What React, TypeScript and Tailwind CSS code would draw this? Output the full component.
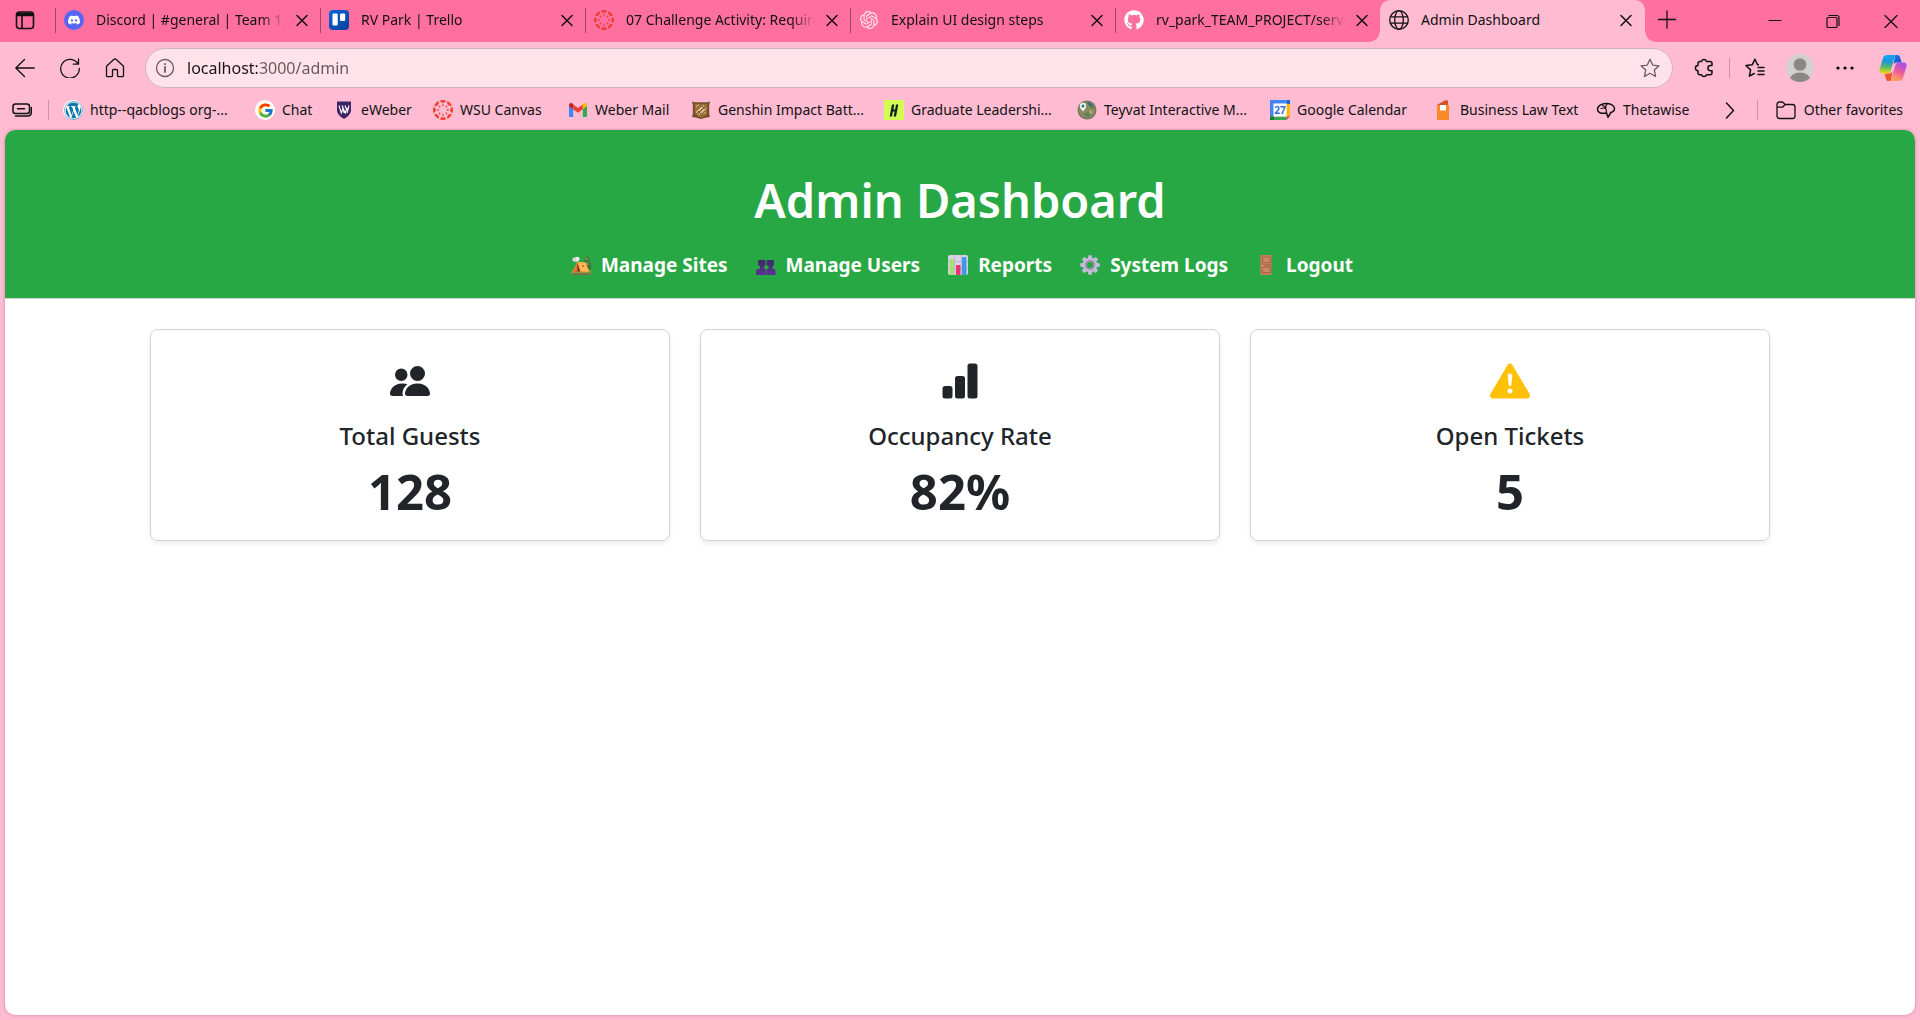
import type { ReactNode } from "react";
import { BsBarChartFill, BsExclamationTriangleFill, BsPeopleFill } from "react-icons/bs";
import { FaGithub, FaWordpress } from "react-icons/fa";
import { FcGoogle } from "react-icons/fc";
import { SiDiscord, SiOpenai } from "react-icons/si";

/* ---------- favicons ---------- */

function DiscordIcon() {
  return (
    <span className="flex size-5 items-center justify-center rounded-full bg-[#5865f2]">
      <SiDiscord className="size-3 text-white" />
    </span>
  );
}

function TrelloIcon() {
  return (
    <svg viewBox="0 0 20 20" className="size-5">
      <defs>
        <linearGradient id="trello" x1="0" y1="0" x2="1" y2="1">
          <stop offset="0" stopColor="#0b66dd" />
          <stop offset="1" stopColor="#083f96" />
        </linearGradient>
      </defs>
      <rect width="20" height="20" rx="4" fill="url(#trello)" />
      <rect x="3.5" y="3.5" width="5.2" height="12" rx="1.2" fill="#fff" />
      <rect x="11" y="3.5" width="5.2" height="7.5" rx="1.2" fill="#fff" />
    </svg>
  );
}

const EIGHTHS = [0, 45, 90, 135, 180, 225, 270, 315];

function CanvasIcon() {
  return (
    <svg viewBox="-10 -10 20 20" className="size-5" fill="#ef4130">
      {EIGHTHS.map((angle) => (
        <g key={angle} transform={`rotate(${angle})`}>
          <path d="M-3.1 -9.5 A10 10 0 0 1 3.1 -9.5 A3.2 3.2 0 0 1 -3.1 -9.5Z" />
          <circle cy="-4.9" r="0.9" />
        </g>
      ))}
    </svg>
  );
}

function WordPressIcon() {
  return (
    <span className="flex size-5 items-center justify-center rounded-full bg-white">
      <FaWordpress className="size-[19px] text-[#1177a8]" />
    </span>
  );
}

function GoogleIcon() {
  return (
    <span className="flex size-5 items-center justify-center rounded-full bg-white">
      <FcGoogle className="size-[17px]" />
    </span>
  );
}

function WeberIcon() {
  return (
    <svg viewBox="0 0 20 20" className="size-5">
      <path d="M3 1.5h14v8.5c0 4-3.2 6.6-7 9-3.8-2.4-7-5-7-9z" fill="#3e2266" />
      <path d="M5 5.500l2.300 7.500 1.700-5 1 5M8 5.500l3.200 7.500 2-5M11 5.500l1.700 4.500M15 5.500l-2 7.500" stroke="#fff" strokeWidth="1.100" fill="none" />
    </svg>
  );
}

function GmailIcon() {
  return (
    <svg viewBox="0 0 20 20" className="size-5">
      <path d="M1 5.5l4.2 3.2V17H2.3C1.6 17 1 16.4 1 15.700z" fill="#4285f4" />
      <path d="M19 5.500l-4.200 3.200V17h2.900c.7 0 1.300-.6 1.300-1.300z" fill="#34a853" />
      <path d="M14.800 4.400v4.800L19 6.100V4.900c0-1.700-1.900-2.600-3.200-1.600z" fill="#fbbc04" />
      <path d="M5.200 9.200V4.400L10 8l4.800-3.600v4.800L10 12.800z" fill="#ea4335" />
      <path d="M1 4.900v1.200l4.200 3.100V4.400l-1-1.100C2.900 2.300 1 3.200 1 4.900z" fill="#c5221f" />
    </svg>
  );
}

function GenshinIcon() {
  return (
    <svg viewBox="0 0 20 20" className="size-5">
      <path d="M1 1.500l3 .7h12l3-.7-.8 3.500v9l.8 3-4.500.8L10 19l-4.500-1.200L1 17l.8-3V5z" fill="#76502a" />
      <path d="M3.800 4h12.400v9L14 16l-4 1.500L6 16l-2.200-3z" fill="#9a6d38" />
      <path d="M5.500 12.500L13 5.500M8 14.500l7-6.500" stroke="#f3dfb4" strokeWidth="1.300" />
      <path d="M5 7l3-2.500M12.500 14l2.500-2" stroke="#e0bd80" strokeWidth="1" />
      <path d="M7 11l3 3M11 6l3.500 3" stroke="#5b3a1b" strokeWidth="1" />
    </svg>
  );
}

function HandshakeIcon() {
  return (
    <svg viewBox="0 0 20 20" className="size-5">
      <rect width="20" height="20" fill="#d3fb52" />
      <path d="M8 4.500h2.300l-.9 5h1.700l.9-5h2.300L12 16.500H9.700l.9-5H8.900l-.9 5H5.700z" fill="#06201c" />
    </svg>
  );
}

function TeyvatIcon() {
  return (
    <svg viewBox="0 0 20 20" className="size-5">
      <circle cx="10" cy="10" r="9.500" fill="#77745a" />
      <circle cx="10" cy="10" r="8.300" fill="#8a8a5c" />
      <path d="M11 3l4 2 2.500 4-3.500-1-3-3zM6 14l5-2 4 3-4 2.500z" fill="#5f7f5a" />
      <path d="M12 9l4 3-3 3z" fill="#b3a877" />
      <path d="M10.500 2.500l5 3.500" stroke="#2a6f7c" strokeWidth="1.600" />
      <path d="M6 11.500C3.500 8.500 2.800 7.500 2.800 6A3.200 3.200 0 0 1 9.200 6C9.200 7.500 8.500 8.500 6 11.500z" fill="#eef6f4" />
      <circle cx="6" cy="6" r="1.500" fill="#1e7b86" />
    </svg>
  );
}

function CalendarIcon() {
  return (
    <svg viewBox="0 0 20 20" className="size-5">
      <path d="M0 0h16.500v4H4v12.500H0z" fill="#4285f4" />
      <path d="M16.500 0H20v4h-3.500z" fill="#1967d2" />
      <path d="M16.500 4H20v12.500h-3.500z" fill="#fbbc04" />
      <path d="M0 16.500h16.500V20H0z" fill="#34a853" />
      <path d="M0 16.500h4V20H0z" fill="#188038" />
      <path d="M16.500 16.500H20L16.500 20z" fill="#ea4335" />
      <rect x="3.500" y="3.500" width="13" height="13" fill="#fff" />
      <text x="10" y="13.700" textAnchor="middle" fontSize="10" fontWeight="700" fill="#2f6fe0" fontFamily="Noto Sans, sans-serif">
        27
      </text>
    </svg>
  );
}

function LawBookIcon() {
  return (
    <svg viewBox="0 0 20 20" className="size-5">
      <path d="M4 5l8-4.500h3V5h1v15H4z" fill="#f68b28" />
      <path d="M4 5l8-4.500h3V5z" fill="#d4502a" />
      <path d="M7 5h6v5.500H7z" fill="#fff" />
    </svg>
  );
}

function ThetawiseIcon() {
  return (
    <svg viewBox="0 0 20 20" className="size-5" fill="none" stroke="#111" strokeWidth="1.500" strokeLinejoin="round" strokeLinecap="round">
      <path d="M1.500 9.500C1.500 6 5.500 3.500 10 3.500s8.500 2 8.500 5c0 2.200-1.600 3.500-3.700 4L12 17.300 10.500 13C5 14 1.500 12.500 1.500 9.500z" />
      <path d="M6.500 5.500c3 1 4 4 4 7.500M5 8.500c2-.8 4-.5 5 1M10 7.500C9.500 6.200 10 5 11 4.500" strokeWidth="1.200" />
    </svg>
  );
}

/* ---------- browser glyphs ---------- */

function Glyph({ children, className = "size-5", width = 1.3 }: { children: ReactNode; className?: string; width?: number }) {
  return (
    <svg viewBox="0 0 20 20" className={className} fill="none" stroke="currentColor" strokeWidth={width} strokeLinecap="round" strokeLinejoin="round">
      {children}
    </svg>
  );
}

function GlobeIcon() {
  return (
    <Glyph>
      <circle cx="10" cy="10" r="9.300" />
      <ellipse cx="10" cy="10" rx="4.300" ry="9.300" />
      <path d="M1.500 6.800h17M1.500 13.200h17" />
    </Glyph>
  );
}

function CloseIcon() {
  return (
    <Glyph width={1.5}>
      <path d="M5 5.500l10 10M15 5.500l-10 10" />
    </Glyph>
  );
}

function CopilotIcon() {
  return (
    <svg viewBox="0 0 28 28" className="size-7">
      <defs>
        <linearGradient id="cpLeft" x1="0.300" y1="0" x2="0.200" y2="1">
          <stop offset="0" stopColor="#12a5f5" />
          <stop offset="0.350" stopColor="#1e96d8" />
          <stop offset="0.650" stopColor="#5fbb62" />
          <stop offset="1" stopColor="#f8dc10" />
        </linearGradient>
        <linearGradient id="cpRight" x1="0.800" y1="0" x2="0.400" y2="1">
          <stop offset="0" stopColor="#9a4ff5" />
          <stop offset="0.500" stopColor="#ee5b9a" />
          <stop offset="1" stopColor="#fda45a" />
        </linearGradient>
        <linearGradient id="cpTop" x1="0" y1="0" x2="1" y2="1">
          <stop offset="0" stopColor="#1b7fe8" />
          <stop offset="1" stopColor="#1646c8" />
        </linearGradient>
      </defs>
      <path d="M16 1h2.500c1.300 0 2 .8 2.500 2.300L22.500 8.500H18c-2 0-3 1-3.500 2.500z" fill="url(#cpTop)" />
      <path d="M12 27H9.500c-1.300 0-2-.8-2.500-2.300L5.500 19.500H10c2 0 3-1 3.500-2.500z" fill="#f0542d" />
      <path d="M8.500 1H18c-1.500 0-2.200 1-2.700 2.700L12 16c-.7 2.500-2 3.500-4 3.500H3.500C.8 19.500 0 17.500.6 15.300L4 4c.6-2 2-3 4.500-3z" fill="url(#cpLeft)" />
      <path d="M19.500 27H10c1.500 0 2.200-1 2.700-2.700L16 12c.7-2.500 2-3.500 4-3.500h4.500c2.700 0 3.500 2 2.900 4.200L24 24c-.6 2-2 3-4.500 3z" fill="url(#cpRight)" />
    </svg>
  );
}

/* ---------- navigation pictograms ---------- */

function CampIcon() {
  return (
    <svg viewBox="0 0 20 20" className="size-5">
      <ellipse cx="5" cy="4.500" rx="3.600" ry="2.300" fill="#d9d5e2" />
      <circle cx="6.500" cy="3.500" r="1.800" fill="#f3f1f8" />
      <path d="M16 0l3 5h-1l2 4v6h-7V8l-1-1 2-2z" fill="#45743a" />
      <path d="M15.500 1.500l2 3.500h-3zM16 6l2.500 4h-4z" fill="#7a9a58" />
      <path d="M0 16c3-2.500 16-3 20-1v4c0 .6-.4 1-1 1H1c-.6 0-1-.4-1-1z" fill="#8a9a42" />
      <path d="M1 18.300h18V20H1z" fill="#85684a" />
      <path d="M6 7L14.500 7.500 18 16.500H2z" fill="#fba13a" />
      <path d="M6.500 7L14.500 7.500l3.500 9h-7z" fill="#ffb950" />
      <path d="M6.500 7.500l2.500 9H3.500z" fill="#5a2f2a" />
      <path d="M6.500 7.500L6.500 16.500H2z" fill="#f3702f" />
      <path d="M11 10h2v2h-2z" fill="#f26a3a" />
    </svg>
  );
}

function UsersIcon() {
  return (
    <svg viewBox="0 0 20 20" className="size-5">
      <defs>
        <linearGradient id="bust" x1="0" y1="0" x2="0" y2="1">
          <stop offset="0" stopColor="#3d2a63" />
          <stop offset="1" stopColor="#593396" />
        </linearGradient>
      </defs>
      <path d="M3 5h5.500l1 1v4l-1.500 1.500v2l2 1V20H0v-3.500C0 14.500 1.500 14 4 13.500v-2L2 10V6z" fill="url(#bust)" />
      <path d="M11.500 5H17l1 1v4l-1.500 1.500v2c2.500.5 3 1 3 3V20H10.500v-5.500l2-1v-2L10.500 10V6z" fill="url(#bust)" />
    </svg>
  );
}

function ReportsIcon() {
  return (
    <svg viewBox="0 0 20 20" className="size-5">
      <rect width="20" height="20" rx="2" fill="#dcd3e6" />
      <path d="M0 6.500h20M0 13h20M6.700 0v20M13.300 0v20" stroke="#b8acc8" strokeWidth="0.800" />
      <rect x="1.500" y="4" width="4.500" height="16" rx="1" fill="#a5e072" />
      <rect x="8" y="10" width="4.500" height="10" rx="1" fill="#e8356f" />
      <rect x="14" y="2" width="4.500" height="18" rx="1" fill="#3c9be8" />
    </svg>
  );
}

function GearIcon() {
  return (
    <svg viewBox="-10 -10 20 20" className="size-5">
      {EIGHTHS.map((angle) => (
        <rect key={angle} x="-2" y="-9.800" width="4" height="5" rx="1.300" fill="#c6b8da" transform={`rotate(${angle})`} />
      ))}
      <circle r="5.300" fill="none" stroke="#c9bddb" strokeWidth="4" />
      <circle r="4.200" fill="none" stroke="#958aa6" strokeWidth="1.600" />
    </svg>
  );
}

function DoorIcon() {
  return (
    <svg viewBox="0 0 20 20" className="size-5">
      <rect x="4.500" width="11" height="20" fill="#c97a58" />
      <path d="M6.500 2h7.500v5.500H6.500zM6.500 12h7.500v5.500H6.500z" fill="#cf8761" stroke="#9f5e3f" strokeWidth="0.800" />
      <path d="M5.500 9.800h9" stroke="#9f5e3f" strokeWidth="0.800" />
      <circle cx="6.500" cy="10.500" r="0.800" fill="#f5c46a" />
    </svg>
  );
}

/* ---------- data ---------- */

const TABS = [
  { title: "Discord | #general | Team 1_C", icon: <DiscordIcon /> },
  { title: "RV Park | Trello", icon: <TrelloIcon /> },
  { title: "07 Challenge Activity: Requirements", icon: <CanvasIcon /> },
  { title: "Explain UI design steps", icon: <SiOpenai className="size-[18px] text-[#ffe3ec]" /> },
  { title: "rv_park_TEAM_PROJECT/server", icon: <FaGithub className="size-5 text-white" /> },
];

const FAVORITES = [
  { label: "http--qacblogs org-...", width: "w-48", icon: <WordPressIcon /> },
  { label: "Chat", width: "w-[79px]", icon: <GoogleIcon /> },
  { label: "eWeber", width: "w-[99px]", icon: <WeberIcon /> },
  { label: "WSU Canvas", width: "w-[135px]", icon: <CanvasIcon /> },
  { label: "Weber Mail", width: "w-[123px]", icon: <GmailIcon /> },
  { label: "Genshin Impact Batt...", width: "w-[193px]", icon: <GenshinIcon /> },
  { label: "Graduate Leadershi...", width: "w-[193px]", icon: <HandshakeIcon /> },
  { label: "Teyvat Interactive M...", width: "w-[193px]", icon: <TeyvatIcon /> },
  { label: "Google Calendar", width: "w-[163px]", icon: <CalendarIcon /> },
  { label: "Business Law Text", width: "w-[163px]", icon: <LawBookIcon /> },
  { label: "Thetawise", width: "w-[110px]", icon: <ThetawiseIcon /> },
];

const NAV = [
  { label: "Manage Sites", icon: <CampIcon /> },
  { label: "Manage Users", icon: <UsersIcon /> },
  { label: "Reports", icon: <ReportsIcon /> },
  { label: "System Logs", icon: <GearIcon /> },
  { label: "Logout", icon: <DoorIcon /> },
];

const STATS = [
  { label: "Total Guests", value: "128", icon: <BsPeopleFill className="size-10" /> },
  { label: "Occupancy Rate", value: "82%", icon: <BsBarChartFill className="size-10" /> },
  { label: "Open Tickets", value: "5", icon: <BsExclamationTriangleFill className="size-10 text-[#ffc107]" /> },
];

/* ---------- browser chrome ---------- */

function TabStrip() {
  return (
    <div className="flex h-[42px] bg-[#ff6f9f]">
      <button aria-label="Tab actions" className="flex w-[55px] shrink-0 items-center justify-center pr-1.5 pb-0.5">
        <Glyph width={1.6}>
          <rect x="1.500" y="2" width="17" height="16.500" rx="3" />
          <path d="M2 4.500h16M7 6v12" />
          <path d="M2.500 3.500h15v2h-15z" fill="currentColor" />
        </Glyph>
      </button>
      {TABS.map((tab) => (
        <div key={tab.title} className="flex w-[265px] min-w-0 items-center pr-2 pb-0.5">
          <span className="h-[25px] w-px shrink-0 bg-[#a34264]" />
          <span className="ml-2 flex w-5 shrink-0 justify-center">{tab.icon}</span>
          <button className="ml-3 min-w-0 flex-1 overflow-hidden text-left whitespace-nowrap [mask-image:linear-gradient(to_right,black_calc(100%-24px),transparent)]">
            {tab.title}
          </button>
          <button aria-label={`Close ${tab.title}`} className="ml-[7px] shrink-0">
            <CloseIcon />
          </button>
        </div>
      ))}
      <div className="relative flex w-[265px] min-w-0 items-center rounded-t-[10px] bg-[#ffbbd1] pr-[9px] pb-0.5 pl-[9px]">
        <span className="absolute bottom-0 -left-2.5 size-2.5 bg-[radial-gradient(circle_at_top_left,transparent_9px,#ffbbd1_10px)]" />
        <span className="absolute -right-2.5 bottom-0 size-2.5 bg-[radial-gradient(circle_at_top_right,transparent_9px,#ffbbd1_10px)]" />
        <GlobeIcon />
        <button className="ml-3 min-w-0 flex-1 overflow-hidden text-left whitespace-nowrap">Admin Dashboard</button>
        <button aria-label="Close Admin Dashboard" className="ml-[7px] shrink-0">
          <CloseIcon />
        </button>
      </div>
      <button aria-label="New tab" className="ml-3 shrink-0 pb-0.5">
        <Glyph width={1.3}>
          <path d="M10 1v17M1.500 9.500h17" />
        </Glyph>
      </button>
      <div className="ml-auto flex shrink-0">
        <button aria-label="Minimize" className="flex w-[58px] items-center justify-center">
          <Glyph width={1.2}>
            <path d="M4 9.500h12" />
          </Glyph>
        </button>
        <button aria-label="Restore" className="flex w-[58px] items-center justify-center">
          <Glyph width={1.2}>
            <rect x="4" y="6.500" width="10" height="10" rx="1" />
            <path d="M6 4.500h8c1.300 0 2 .7 2 2v8" />
          </Glyph>
        </button>
        <button aria-label="Close window" className="flex w-[58px] items-center justify-center">
          <Glyph width={1.2}>
            <path d="M4 4.500l12 12M16 4.500L4 16.500" />
          </Glyph>
        </button>
      </div>
    </div>
  );
}

function Toolbar() {
  return (
    <div className="flex items-center pt-1.5 pr-[13px] pb-0.5 pl-[15px]">
      <div className="flex shrink-0 gap-[25px]">
        <button aria-label="Back">
          <Glyph>
            <path d="M19.300 10H.8M9.500 1.500L.8 10l8.700 8.500" />
          </Glyph>
        </button>
        <button aria-label="Refresh">
          <Glyph>
            <path d="M18.500 1v5.200h-5.200M18 6A9.300 9.300 0 1 0 19.300 10.500" />
          </Glyph>
        </button>
        <button aria-label="Home">
          <Glyph>
            <path d="M1.500 8.200L8.700 1.600c.8-.7 1.800-.7 2.600 0l7.200 6.600v9.300c0 .7-.5 1.200-1.200 1.200h-3.600c-.7 0-1.200-.5-1.200-1.200V12.500c0-.6-.4-1-1-1H8.500c-.6 0-1 .4-1 1v5c0 .7-.5 1.200-1.200 1.200H2.700c-.7 0-1.200-.5-1.200-1.200z" />
          </Glyph>
        </button>
      </div>
      <label className="ml-5 flex h-10 min-w-0 flex-1 items-center rounded-full border border-[#d3b3c0] bg-[#ffe2ea] pr-3 pl-[9px]">
        <Glyph className="size-5 shrink-0 text-[#6b5b62]">
          <circle cx="10" cy="10" r="8.500" />
          <path d="M10 9v5M10 6v.2" strokeWidth="1.800" />
        </Glyph>
        <input
          aria-label="Address"
          defaultValue="localhost:3000/admin"
          className="ml-3 min-w-0 flex-1 bg-[linear-gradient(to_right,#1b1418_70px,#65575d_70px)] bg-clip-text text-base text-transparent caret-black outline-none"
        />
        <button aria-label="Add to favorites" className="text-[#6b5b62]">
          <Glyph>
            <path d="M10 1.200l2.700 5.900 6.300.7-4.700 4.300 1.300 6.400L10 15.300l-5.600 3.200 1.300-6.400L1 7.800l6.300-.7z" />
          </Glyph>
        </button>
      </label>
      <div className="ml-[21px] flex shrink-0 items-center">
        <button aria-label="Extensions">
          <Glyph width={1.5}>
            <path d="M6 3.500h1.500a2.600 2.600 0 0 1 5 0H16c1.200 0 2 .8 2 2v2h-1.500a2.600 2.600 0 0 0 0 5.200H18v2c0 1.200-.8 2-2 2h-3.500a2.600 2.600 0 0 1-5 0H6c-1.200 0-2-.8-2-2v-2a2.600 2.600 0 0 1 0-5.200v-2c0-1.200.8-2 2-2z" />
          </Glyph>
        </button>
        <span className="mx-[15px] h-5 w-px bg-[#d48fa8]" />
        <button aria-label="Favorites">
          <Glyph width={1.5}>
            <path d="M13.300 6.800L12.500 6.700 10 1.200 7.300 6.700 1 7.600l4.600 4.300-1.200 6.300 4.800-2.700M13 9.500h6M13 13h6M13 16.500h6" />
          </Glyph>
        </button>
        <button aria-label="Profile" className="ml-[21px]">
          <svg viewBox="0 0 28 28" className="size-7">
            <clipPath id="avatar">
              <circle cx="14" cy="14" r="14" />
            </clipPath>
            <g clipPath="url(#avatar)">
              <rect width="28" height="28" fill="#d2d0ce" />
              <circle cx="14" cy="10.500" r="6.300" fill="#8a8886" />
              <ellipse cx="14" cy="26" rx="10.500" ry="7.500" fill="#8a8886" />
            </g>
          </svg>
        </button>
        <button aria-label="Settings and more" className="ml-[21px]">
          <svg viewBox="0 0 20 20" className="size-5">
            <circle cx="3" cy="10" r="1.600" />
            <circle cx="10" cy="10" r="1.600" />
            <circle cx="17" cy="10" r="1.600" />
          </svg>
        </button>
        <button aria-label="Copilot" className="ml-6">
          <CopilotIcon />
        </button>
      </div>
    </div>
  );
}

function FavoritesBar() {
  return (
    <div className="flex h-10 items-center pr-[17px] pl-3 whitespace-nowrap">
      <button aria-label="Workspaces" className="shrink-0">
        <Glyph width={1.5}>
          <rect x="1" y="4" width="16.500" height="9.500" rx="2.500" />
          <path d="M5.500 8.700h7M3.500 16h11.500c2.500 0 4.300-1.500 4.300-4V7.500" />
        </Glyph>
      </button>
      <span className="mr-3.5 ml-4 h-5 w-px shrink-0 bg-[#d48fa8]" />
      <div className="flex min-w-0 flex-1 overflow-hidden">
        {FAVORITES.map((item) => (
          <a key={item.label} href="#" className={`flex shrink-0 items-center gap-[7px] ${item.width}`}>
            <span className="shrink-0">{item.icon}</span>
            {item.label}
          </a>
        ))}
      </div>
      <button aria-label="More favorites" className="mr-[17px] shrink-0">
        <Glyph width={1.5}>
          <path d="M6.500 3l7 7.500-7 7.500" />
        </Glyph>
      </button>
      <span className="mr-[18px] h-5 w-px shrink-0 bg-[#d48fa8]" />
      <button className="flex shrink-0 items-center gap-2">
        <Glyph>
          <path d="M1 4.500C1 3 2 2 3.500 2h3l2.700 2.500h7.300c1.500 0 2.500 1 2.500 2.500v9c0 1.500-1 2.500-2.500 2.500h-13C2 18.500 1 17.500 1 16zM1 7.200h5.500l2.700-2.700" />
        </Glyph>
        Other favorites
      </button>
    </div>
  );
}

/* ---------- page ---------- */

export default function App() {
  return (
    <div className="flex min-h-screen flex-col bg-[#ffbbd1] pb-[5px] font-['Noto_Sans',sans-serif] text-sm text-[#111]">
      <TabStrip />
      <Toolbar />
      <FavoritesBar />
      <div className="mx-[5px] flex-1 overflow-hidden rounded-[10px] bg-white text-[#212529] shadow-[0_0_3px_rgba(120,40,70,0.4)]">
        <header className="border-b border-[#cfd4d0] bg-[#28a745] pt-10 pb-[18px] text-white">
          <h1 className="text-center text-[47px] leading-[60px] font-semibold">Admin Dashboard</h1>
          <nav className="mt-5 flex flex-wrap justify-center gap-x-7 pl-1">
            {NAV.map((item) => (
              <a key={item.label} href="#" className="flex items-center gap-2.5 text-[19px] leading-[30px] font-bold">
                {item.icon}
                {item.label}
              </a>
            ))}
          </nav>
        </header>
        <main className="mx-auto grid max-w-[1620px] grid-cols-3 gap-[30px] pt-[30px]">
          {STATS.map((stat) => (
            <section key={stat.label} className="flex flex-col items-center rounded-lg border border-[#d2d3d4] pt-[31px] pb-[19px] shadow-[0_3px_5px_rgba(0,0,0,0.075)]">
              {stat.icon}
              <h2 className="mt-5 text-2xl leading-[30px] font-medium">{stat.label}</h2>
              <p className="mt-2.5 text-[49px] leading-[60px] font-bold">{stat.value}</p>
            </section>
          ))}
        </main>
      </div>
    </div>
  );
}
